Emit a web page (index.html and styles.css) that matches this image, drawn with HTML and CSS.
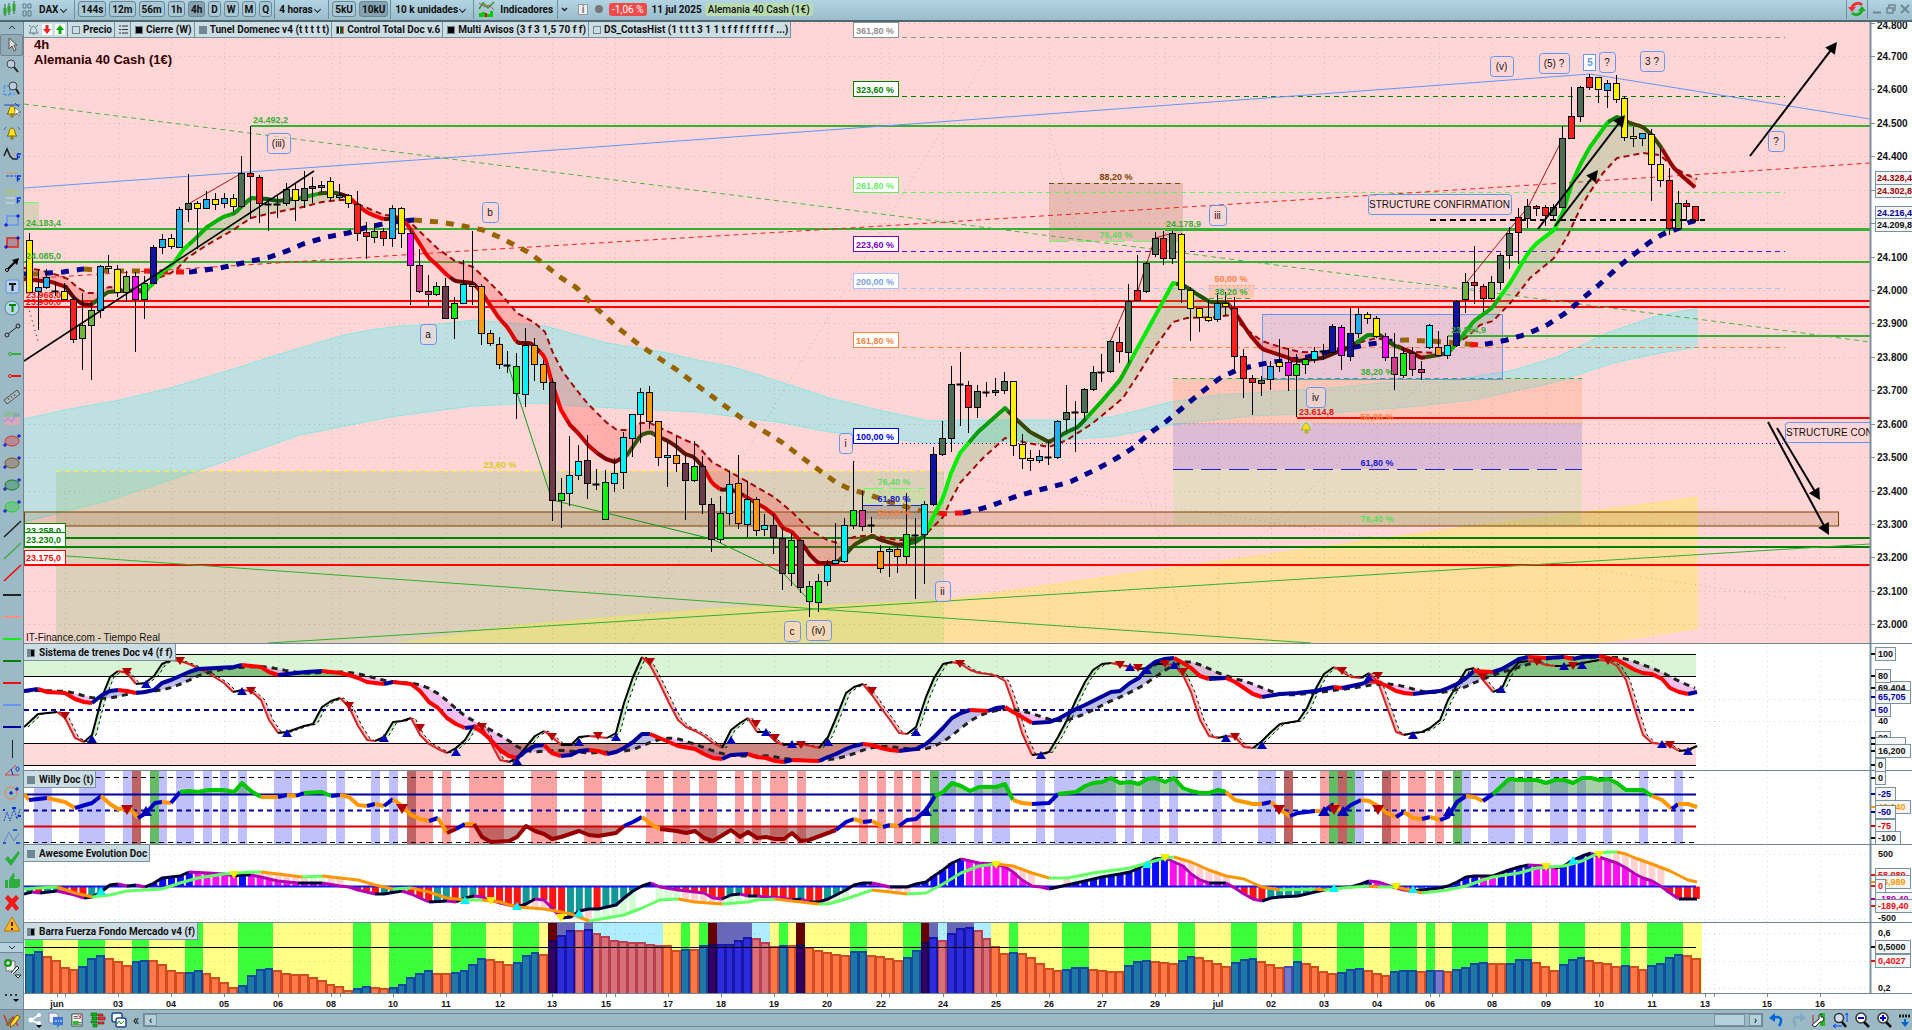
FILE: index.html
```
<!DOCTYPE html>
<html lang="es">
<head>
  <meta charset="utf-8">
  <title>DAX - Alemania 40 Cash (1€)</title>
  <link rel="stylesheet" href="styles.css">
</head>

<body>
  <header class="topbar">
    <svg class="logo" width="16" height="18" viewBox="0 0 16 18"><path d="M4 4v12M8 3v12M13 1v13" stroke="#1a7a1a"/><path d="M2.500 8h3v6h-3zM6.500 6h3v6h-3zM11.500 4h3v7h-3z" fill="#2fa52f"/></svg>
    <svg class="grip" width="10" height="18" viewBox="0 0 10 18"><path d="M1 4h3v4H1zM6 4h3v4H6zM1 11h3v5H1zM6 11h3v5H6z" fill="none" stroke="#5f7885"/></svg>
    <label class="pick pick-dax"><select aria-label="Valor"><option>DAX</option></select></label>
    <div class="group">
      <button>144s</button><button>12m</button><button>56m</button><button>1h</button><button class="on">4h</button><button>D</button><button>W</button><button>M</button><button>Q</button>
    </div>
    <label class="pick pick-time"><select aria-label="Periodo"><option>4 horas</option></select></label>
    <div class="group wide"><button>5kU</button><button class="on">10kU</button></div>
    <label class="pick pick-units"><select aria-label="Unidades"><option>10 k unidades</option></select></label>
    <button class="indicators">
      <svg width="18" height="18" viewBox="0 0 18 18"><path d="M1 9l4-6 5 5 6-6" fill="none" stroke="#2c9a2c" stroke-width="1.500"/><path d="M1 3l6 4 4-2 5 5" fill="none" stroke="#c44"/><path d="M1 17v-4h3v4M4 17v-5h3v5M9 17v-3h3v3M12 17v-6h3v6" fill="#0c0"/><path d="M7 17v-4h2v4z" fill="#e00"/></svg>
      Indicadores
    </button>
    <button class="more" aria-label="Más"><svg width="7" height="5" viewBox="0 0 7 5"><path d="M1 1l2.500 2.500L6 1" fill="none" stroke="#222" stroke-width="1.500"/></svg></button>
    <button class="info" aria-label="Información">i</button>
    <span class="dot"></span>
    <span class="change">-1,06 %</span>
    <span class="date">11 jul 2025</span>
    <span class="asset">Alemania 40 Cash (1€)</span>
    <button class="refresh" aria-label="Actualizar"><svg width="18" height="16" viewBox="0 0 18 16"><path d="M14 4A6 6 0 0 0 4 7" fill="none" stroke="#e33" stroke-width="3"/><path d="M0 6h8l-4 5z" fill="#e33"/><path d="M4 12a6 6 0 0 0 10-3" fill="none" stroke="#2a2" stroke-width="3"/><path d="M10 10h8l-4-5z" fill="#2a2"/></svg></button>
    <div class="window">
      <button aria-label="Minimizar"><svg width="10" height="10" viewBox="0 0 10 10"><path d="M1 8.500h8" stroke="#6f8793" stroke-width="2"/></svg></button>
      <button aria-label="Restaurar"><svg width="10" height="10" viewBox="0 0 10 10"><path d="M3 4V1h6v5H7M1 4h6v5H1z" fill="none" stroke="#6f8793" stroke-width="1.500"/></svg></button>
      <button aria-label="Cerrar"><svg width="10" height="10" viewBox="0 0 10 10"><path d="M1 1l8 8M9 1l-8 8" stroke="#6f8793" stroke-width="2"/></svg></button>
    </div>
  </header>

  <main class="desk">
    <nav class="tools" id="tools"></nav>

    <section class="charts">
      <div class="panel price">
        <div class="legend">
          <span class="alarms">
            <svg width="11" height="11" viewBox="0 0 11 11"><path d="M1 9c2-1 1-6 4.500-6.500C9 3 8 8 10 9zM4.500 10h2M1 1l2 2M10 1L8 3" fill="none" stroke="#5f7885"/></svg>
            <svg width="10" height="11" viewBox="0 0 10 11"><path d="M0 0h10v11H0z" fill="#fff"/><path d="M3.500 1h3v4H9L5 10 1 5h2.500z" fill="#e22"/></svg>
            <svg width="10" height="11" viewBox="0 0 10 11"><path d="M0 0h10v11H0z" fill="#fff"/><path d="M3.500 10h3V6H9L5 1 1 6h2.500z" fill="#0a0"/></svg>
          </span>
          <span><i class="sw open"></i>Precio</span>
          <span><svg width="9" height="9" viewBox="0 0 9 9"><path d="M0 1h2M3 1h6M0 4.500h2M3 4.500h6M0 8h2M3 8h6" stroke="#333"/></svg></span>
          <span><i class="sw black"></i>Cierre (W)</span>
          <span><i class="sw slate"></i>Tunel Domenec v4 (t t t t t)</span>
          <span><i class="sw stripes"></i>Control Total Doc v.6</span>
          <span><i class="sw black"></i>Multi Avisos (3 f 3 1,5 70 f f)</span>
          <span><i class="sw open"></i>DS_CotasHist (1 t t t 3 1 1 t f f f f f f f f ...)</span>
        </div>
        <svg id="price" viewBox="24 22 1888 622"></svg>
      </div>
      <div class="panel trains">
        <h2><i class="sw half"></i>Sistema de trenes Doc v4 (f f)</h2>
        <svg id="trains" viewBox="24 644 1888 127"></svg>
      </div>
      <div class="panel willy">
        <h2><i class="sw slate"></i>Willy Doc (t)</h2>
        <svg id="willy" viewBox="24 771 1888 74"></svg>
      </div>
      <div class="panel awesome">
        <h2><i class="sw slate"></i>Awesome Evolution Doc</h2>
        <svg id="awesome" viewBox="24 845 1888 78"></svg>
      </div>
      <div class="panel force">
        <h2><i class="sw half"></i>Barra Fuerza Fondo Mercado v4 (f)</h2>
        <svg id="force" viewBox="24 923 1888 71"></svg>
      </div>
      <div class="panel dates"><svg id="dates" viewBox="24 994 1888 15"></svg></div>
    </section>
  </main>

  <footer class="bottombar">
    <button class="draw" aria-label="Dibujar"><svg width="18" height="18" viewBox="0 0 18 18"><path d="M1 4l4 10 5-8 5 9" fill="none" stroke="#c33" stroke-width="1.500"/><path d="M3 15l4-8 4 8" fill="none" stroke="#393"/><path d="M8 12l6-8 3 2-6 8-4 2z" fill="#fd3" stroke="#850"/></svg></button>
    <button aria-label="Compartir"><svg width="16" height="16" viewBox="0 0 16 16"><path d="M12 3L4 8l8 4" fill="none" stroke="#fff" stroke-width="1.500"/><circle cx="12" cy="3" r="2" fill="#fff"/><circle cx="4" cy="8" r="2.500" fill="#fff"/><circle cx="12" cy="11" r="2" fill="#fff"/><path d="M9 13h6l-3 3z"/></svg></button>
    <button aria-label="Chat"><svg width="16" height="16" viewBox="0 0 16 16"><path d="M1 1h7l2 2v8H1z" fill="#eef" stroke="#88a"/><path d="M5 5h10v8h-3l-3 3v-3H5z" fill="#3a78d8"/><path d="M7 9h2M10 9h1M12 9h2" stroke="#fff"/></svg></button>
    <button aria-label="Informe"><svg width="12" height="14" viewBox="0 0 14 16"><path d="M1 1h12v14H1z" fill="#fff" stroke="#333"/><path d="M2 9h7v5H2z" fill="#3b3"/><path d="M3 4h5M3 6h5M9 11h3M9 13h3" stroke="#444"/><path d="M8 2l3 3M11 2v4H8" stroke="#c22" fill="none"/></svg></button>
    <button aria-label="Libro"><svg width="16" height="16" viewBox="0 0 16 16"><path d="M1 1h6v3H1zM2 5h5v3H2zM1 9h6v2H1zM3 12h4v3H3z" fill="#0b0" stroke="#050" stroke-width=".5"/><path d="M8 2h5v2H8zM8 5h7v3H8zM8 10h6v2H8z" fill="#e33" stroke="#600" stroke-width=".5"/></svg></button>
    <button aria-label="Ventanas"><svg width="16" height="16" viewBox="0 0 16 16"><rect x="1" y="1" width="10" height="9" rx="2" fill="#fff" stroke="#248" stroke-width="1.500"/><rect x="5" y="6" width="10" height="9" rx="2" fill="#fff" stroke="#248" stroke-width="1.500"/><path d="M6 12l2-3 2 3 3-3" stroke="#292" fill="none"/></svg></button>
    <button class="fold">«</button>
    <div class="scroll">
      <button aria-label="Atrás">‹</button>
      <div class="track"><div class="thumb"></div></div>
      <button aria-label="Adelante">›</button>
    </div>
    <div class="zoom">
      <button aria-label="Deshacer"><svg width="16" height="16" viewBox="0 0 16 16"><path d="M4 6c8-3 10 2 6 8" fill="none" stroke="#06d" stroke-width="2.500"/><path d="M0 6l6-5v9z" fill="#06d"/></svg></button>
      <button aria-label="Rehacer"><svg width="16" height="16" viewBox="0 0 16 16"><path d="M12 6C4 3 2 8 6 14" fill="none" stroke="#7faac4" stroke-width="2.500"/><path d="M16 6l-6-5v9z" fill="#7faac4"/></svg></button>
      <button aria-label="Ajustes"><svg width="16" height="16" viewBox="0 0 16 16"><path d="M9 1h5v13H9z" fill="#2b2"/><path d="M1 13L8 7V3l2-1v3h2l1 2-2 3H9l-5 5z" fill="#fff" stroke="#222"/><path d="M2 3v8" stroke="#c22"/></svg></button>
      <button aria-label="Zoom libre"><svg width="17" height="17" viewBox="0 0 17 17"><circle cx="7" cy="6" r="4.500" fill="#cde" stroke="#333" stroke-width="1.500"/><path d="M10 10l4 5" stroke="#111" stroke-width="2.500"/><path d="M15 1v9M2 14h8M13 3l2-2 1 2M4 12l-3 2 3 2" stroke="#04f" fill="none"/></svg></button>
      <button aria-label="Alejar"><svg width="17" height="17" viewBox="0 0 17 17"><circle cx="7" cy="6" r="5" fill="#fff" stroke="#333" stroke-width="1.500"/><path d="M10 10l5 5" stroke="#111" stroke-width="2.500"/><path d="M4 6h6" stroke="#00d" stroke-width="2"/></svg></button>
      <button aria-label="Acercar"><svg width="17" height="17" viewBox="0 0 17 17"><circle cx="7" cy="6" r="5" fill="#fff" stroke="#333" stroke-width="1.500"/><path d="M10 10l5 5" stroke="#111" stroke-width="2.500"/><path d="M4 6h6M7 3v6" stroke="#00d" stroke-width="2"/></svg></button>
      <button aria-label="Último"><svg width="14" height="16" viewBox="0 0 14 16"><path d="M1 4h12" stroke="#222" stroke-width="3" stroke-dasharray="2 1"/><path d="M7 7v3" stroke="#06c" stroke-width="2"/><path d="M3 10h8l-4 5z" fill="#06c"/></svg></button>
    </div>
  </footer>

  <script src="chart.js"></script>
</body>
</html>
```
FILE: styles.css
```
* {
  box-sizing: border-box;
}

body {
  margin: 0;
  height: 100vh;
  display: flex;
  flex-direction: column;
  overflow: hidden;
  background: #9cb9c6;
  font: bold 10px Roboto, "Liberation Sans", sans-serif;
  color: #111;
}

button, select {
  font: inherit;
  color: inherit;
  margin: 0;
  padding: 0;
  border: 0;
  background: none;
}

button {
  display: flex;
  align-items: center;
  justify-content: center;
}

svg {
  display: block;
  flex: none;
}

/* top toolbar */
.topbar {
  flex: none;
  display: flex;
  align-items: center;
  height: 22px;
  padding-bottom: 2px;
  background: linear-gradient(#b3d4e2, #9bbccb);
  border-bottom: 2px solid #4f6873;
  white-space: nowrap;
}

.logo {
  margin: 0 5px 0 1px;
}

.grip {
  margin-right: 3px;
}

.pick {
  position: relative;
  height: 20px;
  padding: 0 6px 0 4px;
  border-right: 1px solid #6f8f9d;
  display: flex;
  align-items: center;
}

.pick select {
  appearance: none;
  width: 100%;
}

.pick::after {
  content: "";
  position: absolute;
  right: 8px;
  width: 4px;
  height: 4px;
  border: solid #222;
  border-width: 0 1px 1px 0;
  transform: rotate(45deg);
}

.pick-dax { width: 40px; }
.pick-time { width: 54px; }
.pick-units { width: 83px; }

.group {
  height: 20px;
  display: flex;
  align-items: center;
  gap: 3px;
  padding: 0 2px 0 3px;
  border-right: 1px solid #6f8f9d;
}

.group button {
  height: 16px;
  padding: 0 2px;
  border: 1px solid #6b8896;
  border-radius: 3px;
  background: #a9c8d6;
}

.group .on {
  background: #86a2b0;
}

.indicators {
  height: 20px;
  gap: 4px;
  padding: 0 4px;
  border-right: 1px solid #6f8f9d;
}

.more {
  width: 12px;
}

.info {
  width: 10px;
  height: 11px;
  margin-left: 8px;
  background: #eee;
  border: 1px solid #999;
  color: #777;
}

.dot {
  width: 8px;
  height: 8px;
  margin: 0 6px 0 7px;
  border-radius: 50%;
  background: #777;
}

.change {
  padding: 1px 3px;
  border-radius: 3px;
  background: #f04a4a;
  color: #fff;
  font-weight: normal;
}

.date {
  margin: 0 3px 0 5px;
}

.asset {
  padding: 1px 3px;
  border-radius: 3px;
  background: #b9dcb0;
  font-weight: 500;
}

.refresh {
  margin-left: auto;
  height: 20px;
  padding: 0 1px;
  border: solid #6f8f9d;
  border-width: 0 1px;
}

.window {
  display: flex;
  gap: 4px;
  padding: 0 2px 0 4px;
}

/* drawing tools */
.desk {
  flex: 1;
  min-height: 0;
  display: flex;
}

.tools {
  flex: none;
  width: 24px;
  display: flex;
  flex-direction: column;
  border-right: 1px solid #6f8793;
  background: #9cb9c6;
}

.tools button {
  flex: none;
  height: 22px;
}

.tools .on {
  background: #91aab5;
  border: 1px solid #6f8793;
  border-radius: 2px;
}

.tools .up {
  height: 12px;
}

.tools .list {
  flex: 1;
  min-height: 0;
  overflow: hidden;
}

.tools .list button {
  width: 100%;
}

.tools .down {
  height: 11px;
  border: solid #6f8793;
  border-width: 1px 0;
  background: #b4d0dc;
}

.tools .tall {
  height: 28px;
}

/* stacked chart panels */
.charts {
  flex: 1;
  min-width: 0;
  display: flex;
  flex-direction: column;
  background: #fff;
}

.panel {
  position: relative;
  min-height: 0;
  flex-basis: 0;
}

.panel > svg {
  width: 100%;
  height: 100%;
}

.price { flex-grow: 622; }
.trains { flex-grow: 127; }
.willy { flex-grow: 74; }
.awesome { flex-grow: 78; }
.force { flex-grow: 71; }
.dates { flex-grow: 15; }

.panel h2, .legend {
  position: absolute;
  top: 0;
  left: 0;
  margin: 0;
  display: flex;
  align-items: center;
  height: 16px;
  font-size: 10px;
  background: #cddde4;
  border: solid #7a929e;
  border-width: 0 1px 1px 0;
  white-space: nowrap;
}

.panel h2 {
  height: 17px;
  padding: 1px 2px 0 3px;
}

.legend span {
  height: 15px;
  display: flex;
  align-items: center;
  gap: 3px;
  padding: 0 2px 0 4px;
  border-right: 1px solid #7a929e;
}

.legend span:last-child {
  border: 0;
}

.sw {
  width: 8px;
  height: 8px;
  border: 1px solid #6f8793;
}

.panel h2 .sw {
  margin-right: 4px;
}

.black { background: #000; }
.slate { background: #6f8793; }
.half { background: linear-gradient(90deg, #6f8793 50%, #000 50%); }
.stripes { background: linear-gradient(90deg, #000 25%, #e0c 25% 40%, #fff 40% 50%, #060 50% 75%, #c00 75%); }

/* text inside the charts */
.t {
  font: bold 9px "Liberation Sans", sans-serif;
}

.axis {
  font: bold 10px "Liberation Sans", sans-serif;
}

.note {
  font: 10px "Liberation Sans", sans-serif;
}

.title {
  font: bold 13px "Liberation Sans", sans-serif;
}

.small {
  font: 10px "Liberation Sans", sans-serif;
}

/* bottom bar */
.bottombar {
  flex: none;
  height: 21px;
  display: flex;
  align-items: center;
  border-top: 1px solid #6f8793;
}

.bottombar > button {
  width: 21px;
}

.bottombar > .draw {
  width: 24px;
  height: 20px;
  border-right: 1px solid #6f8793;
  background: #8aa3af;
}

.bottombar > .fold {
  width: 14px;
  font-size: 14px;
  font-weight: normal;
}

.scroll {
  flex: 1;
  display: flex;
  height: 14px;
  border: 1px solid #6f8793;
}

.scroll button {
  width: 13px;
  background: #b4d0dc;
  border: 1px solid #7a929e;
}

.track {
  flex: 1;
  display: flex;
  justify-content: flex-end;
  padding-right: 4px;
}

.thumb {
  width: 31px;
  border: 1px solid #7a929e;
  background: #b4d0dc;
}

.zoom {
  display: flex;
  gap: 5px;
  padding-left: 6px;
}
```
FILE: chart.js
```
const NS = 'http://www.w3.org/2000/svg';
const STEP = 8.865, FIRST = 29.7, RIGHT = 1870.5;

function el(parent, name, attrs, text) {
  const e = document.createElementNS(NS, name);
  for (const k in attrs) e.setAttribute(k, attrs[k]);
  if (text !== undefined) e.textContent = text;
  parent.appendChild(e);
  return e;
}
const rect = (g, x, y, w, h, fill, stroke) => el(g, 'rect', { x, y, width: w, height: h, fill, stroke: stroke || 'none' });
const line = (g, x1, y1, x2, y2, stroke, width = 1, dash = '') =>
  el(g, 'line', { x1, y1, x2, y2, stroke, 'stroke-width': width, 'stroke-dasharray': dash });
const text = (g, x, y, s, fill, cls = 't', anchor = 'start') =>
  el(g, 'text', { x, y, fill, class: cls, 'text-anchor': anchor }, s);
const poly = (g, pts, fill) => el(g, 'polygon', { points: pts.join(' '), fill });
const path = (g, pts, stroke, width = 1, dash = '') =>
  el(g, 'polyline', { points: pts.join(' '), fill: 'none', stroke, 'stroke-width': width, 'stroke-dasharray': dash, 'stroke-linejoin': 'round' });
const parse = s => s.trim().split(/\s+/).map(p => p.split(',').map(Number));
const xAt = i => FIRST + STEP * i;

function at(pts, x) {
  if (x <= pts[0][0]) return pts[0][1];
  for (let i = 1; i < pts.length; i++) {
    if (x <= pts[i][0]) {
      const [a, b] = [pts[i - 1], pts[i]];
      return a[1] + (b[1] - a[1]) * (x - a[0]) / (b[0] - a[0] || 1);
    }
  }
  return pts[pts.length - 1][1];
}

// one polyline for each stretch of the same colour
function runs(g, pts, colour, width, dash) {
  let cur = [pts[0]], col = null;
  for (let i = 1; i < pts.length; i++) {
    const c = colour(pts[i - 1], pts[i]);
    if (col && c !== col) { path(g, cur, col, width, dash); cur = [pts[i - 1]]; }
    cur.push(pts[i]);
    col = c;
  }
  path(g, cur, col, width, dash);
}
const byX = list => (a, b) => (list.find(l => (a[0] + b[0]) / 2 < l[0]) || list[list.length - 1])[1];
const dense = (pts, step = 3) => {
  const out = [];
  for (let x = pts[0][0]; x <= pts[pts.length - 1][0]; x += step) out.push([x, at(pts, x)]);
  return out;
};

// fill between two curves, colour depends on which one is on top
function band(g, fa, fb, x0, x1, above, below) {
  let up = [], down = [], sign = 0;
  const flush = () => { if (up.length > 1 && sign) poly(g, up.concat(down.reverse()), sign < 0 ? above : below); };
  for (let x = x0; x <= x1; x += 2) {
    const a = fa(x), b = fb(x), s = a < b ? -1 : a > b ? 1 : 0;
    if (s !== sign) { flush(); up = []; down = []; sign = s; }
    up.push([x, a]); down.push([x, b]);
  }
  flush();
}

function tri(g, x, y, up, fill, r = 5) {
  const h = r - 1;
  poly(g, up ? [[x - r, y + h], [x + r, y + h], [x, y - h]] : [[x - r, y - h], [x + r, y - h], [x, y + h]], fill);
}
function tag(g, y, s, colour, w) {
  rect(g, 1875.5, y - 6.5, w || s.length * 5 + 5, 13, '#f4f6f7', '#7a929e');
  text(g, 1878, y + 3, s, colour);
  line(g, 1871, y, 1875, y, colour, 2);
}
function frame(g, y0, y1) {
  rect(g, 1871, y0, 41, y1 - y0, '#fff');
  line(g, RIGHT, y0, RIGHT, y1, '#7a929e', 2);
  line(g, 24, y1 - 0.5, 1912, y1 - 0.5, '#6f8793');
}

const days = [[57, 'jun'], [65], [118, '03'], [171, '04'], [224, '05'], [278, '06'], [331, '08'], [340], [393, '10'], [446, '11'],
  [500, '12'], [552, '13'], [606, '15'], [615], [668, '17'], [721, '18'], [774, '19'], [827, '20'], [881, '22'], [889], [943, '24'],
  [996, '25'], [1049, '26'], [1102, '27'], [1155, '29'], [1165], [1218, 'jul'], [1271, '02'], [1324, '03'], [1377, '04'], [1430, '06'],
  [1439], [1492, '08'], [1546, '09'], [1599, '10'], [1652, '11'], [1705, '13'], [1714], [1767, '15'], [1820, '16']];
function grid(g, y0, y1, rows = [], colour = '#00000022') {
  days.forEach(d => { if (d[0] > 60) line(g, d[0] + .5, y0, d[0] + .5, y1, colour, 1, '1 4'); });
  rows.forEach(y => line(g, 24, y, 1870, y, colour, 1, '1 4'));
}

/* ---------- price ---------- */
const INK = { y: '#fff000', c: '#22b0ec', r: '#ff1e1e', g: '#4f6e54', o: '#ff9a10', n: '#10f010', a: '#00f4ff', m: '#ff00ff',
  p: '#d33c8c', b: '#1212a4', w: '#6c3a48', l: '#72b43c', k: '#111' };

// colour, high, body top, body bottom, low
const candles = `y233,240,292,292 c270,287,291,330 c269,277,287,289 k282,291,291,296 y283,291,299,299 r297,299,339,343 l293,325,338,370
l303,310,325,380 c265,266,310,318 y255,266,268,273 y265,269,292,297 l271,276,292,302 m272,276,299,352 n276,283,299,319 b245,247,283,283
c234,239,247,254 y234,238,246,249 c207,209,247,247 g174,203,209,222 y201,203,208,249 c191,199,208,209 y193,199,204,210 c193,198,203,208
y194,198,206,212 g156,173,206,208 r126,173,176,219 r175,177,203,223 k199,204,204,231 k195,204,204,218 g183,189,203,206 y183,189,200,221
g171,188,200,208 g177,186,188,203 g181,185,187,192 y177,181,197,201 c184,195,197,199 y194,195,203,208 r191,204,233,241 r222,232,236,259
l223,231,237,243 r228,231,238,246 c205,208,238,247 y207,208,233,248 m228,233,265,305 p249,265,291,293 p275,291,294,307 n282,286,294,296
w278,286,318,318 n297,303,318,339 a260,284,303,304 o231,284,286,305 o284,286,333,345 o330,333,343,346 o337,344,364,369 k351,365,365,373
n353,366,393,419 a328,345,394,407 o338,345,364,381 o360,364,382,390 w378,382,500,521 n478,493,500,528 a436,475,493,506 a445,461,475,480
w435,460,483,499 k469,484,484,490 n470,482,519,519 a458,473,483,492 a432,437,472,489 a414,414,438,457 a388,392,414,443 o386,392,421,429
o421,421,457,466 a442,455,457,487 o437,455,463,472 w455,463,480,520 n441,466,480,482 w456,466,504,514 w498,504,539,552 n496,513,539,543
a471,484,513,525 o455,483,523,529 a481,499,524,537 o497,499,530,536 a514,525,529,536 w514,525,537,554 w527,538,573,590 n533,540,573,586
w540,540,587,593 n581,586,601,617 n574,581,602,612 a560,565,581,586 a523,560,563,564 a518,525,561,563 n461,510,525,529 p491,510,526,531
k517,525,525,533 o545,551,568,573 a547,549,551,577 o547,549,556,573 n493,534,556,564 k518,535,535,599 a501,504,534,584 b447,454,504,506
g421,438,454,456 g366,384,438,452 k352,384,384,426 r381,385,407,433 g385,391,407,418 k382,392,392,397 g378,390,392,396 g372,381,390,394
y381,381,445,456 y434,444,458,469 y450,458,460,471 c450,456,460,463 k441,457,457,465 c420,421,457,459 g385,412,419,432 k401,412,412,452
g388,389,412,419 g366,372,389,391 k354,372,372,382 g340,341,371,373 r327,342,351,363 g284,301,352,363 r255,290,300,301 g262,263,291,293
g232,238,254,257 r231,238,258,265 g231,233,258,264 y233,234,289,303 y287,290,308,341 y308,308,317,332 y300,317,320,322 c293,303,319,322
y292,303,306,316 r297,308,356,372 r349,356,378,398 r375,378,382,415 g376,380,383,396 c361,366,379,390 y339,362,366,372 m348,362,375,391
n354,364,375,417 n355,359,364,374 a347,351,359,363 k344,351,351,360 b324,326,352,353 m325,327,355,370 b308,333,356,361 c308,314,333,338
y312,314,318,324 y316,318,336,338 m333,336,357,361 p333,357,374,390 n347,353,375,378 p347,353,369,376 p361,369,372,380 a324,325,347,349
o331,347,355,357 a336,345,355,359 b300,301,345,347 l273,282,299,313 r246,282,285,304 r284,286,298,312 l276,282,298,300 g253,255,282,290
g227,233,255,269 r208,217,232,264 g199,206,218,228 r205,206,208,216 r205,207,215,226 g204,207,215,221 g126,138,207,208 r87,116,138,138
g86,87,116,122 r74,77,87,90 y77,77,89,103 c80,83,90,108 y75,83,99,103 y96,98,137,141 y127,136,138,147 c133,133,138,146 y129,134,164,201
y148,164,180,187 r168,180,228,235 l191,203,228,229 r200,203,206,221 r206,206,220,222`.split(/\s+/).map(s => [s[0], ...s.slice(1).split(',').map(Number)]);

const ma = parse(`24,279 33,280 52,282 66,287 74,298 82,304 91,305 100,298 108,292 120,291 145,290 152,285 162,272 173,264 183,250 197,237
207,227 223,217 235,213 243,205 251,198 267,199 278,201 300,198 322,193 337,193 349,197 357,205 368,213 383,219 403,219 411,230 428,257
437,265 447,275 455,281 473,283 482,293 499,318 508,328 517,343 530,343 535,347 545,357 552,383 561,410 570,425 579,434 588,445 597,453
606,459 615,462 627,455 632,448 641,435 650,432 659,437 668,441 677,447 685,454 694,457 703,467 712,483 721,490 730,489 739,493 748,498
756,503 765,508 774,515 783,528 792,532 801,542 810,555 818,563 836,563 845,555 854,545 863,540 872,536 881,540 898,545 916,542 925,535
934,515 943,498 951,473 960,453 978,432 1005,408 1017,420 1030,432 1049,442 1067,432 1078,427 1102,401 1120,380 1138,347 1160,307 1173,283
1183,285 1200,296 1210,302 1228,303 1238,317 1250,335 1262,349 1280,355 1297,361 1323,358 1342,350 1353,345 1368,335 1380,335 1393,345
1413,353 1421,358 1439,355 1448,353 1457,343 1474,321 1492,308 1510,283 1528,253 1537,243 1554,230 1563,212 1572,183 1581,163 1590,147
1608,122 1617,117 1630,123 1643,127 1652,135 1661,147 1673,167 1683,177 1697,189`);
const maInk = [[62, '#a00000'], [92, '#5e0000'], [147, '#2c5a00'], [190, '#00e000'], [230, '#00b400'], [262, '#0c940c'], [300, '#065c06'],
  [318, '#16a016'], [340, '#2c5200'], [352, '#500'], [384, '#f00000'], [405, '#6a0f00'], [450, '#f00000'], [477, '#700000'], [516, '#e00000'],
  [540, '#7c0000'], [568, '#ff0000'], [598, '#c40000'], [620, '#800000'], [655, '#36500a'], [704, '#5a1600'], [720, '#e80000'], [745, '#700000'],
  [800, '#d00000'], [837, '#880000'], [876, '#3c4a00'], [904, '#5a1e00'], [926, '#087008'], [968, '#00f000'], [1008, '#0a9c0a'],
  [1055, '#3c4600'], [1085, '#067006'], [1130, '#00b800'], [1176, '#00ea00'], [1230, '#205400'], [1295, '#980000'], [1355, '#521000'],
  [1376, '#0a8a0a'], [1400, '#2c5200'], [1424, '#7a0000'], [1450, '#3c4a00'], [1500, '#08b008'], [1560, '#00ec00'], [1608, '#00d000'],
  [1626, '#0a800a'], [1662, '#3c4600'], [1700, '#980000']];
const sig = parse(`24,268 40,270 57,275 68,279 77,287 87,293 95,293 102,289 110,287 120,289 145,293 158,278 171,273 178,268 187,258 207,245
233,230 251,218 267,214 287,210 303,207 322,202 340,200 353,200 360,205 384,215 402,217 413,225 437,248 455,261 473,267 487,280 500,293
517,313 535,323 545,332 553,353 563,372 579,393 588,404 606,422 617,430 627,430 641,423 650,423 667,431 685,440 697,445 712,462 730,472
748,482 765,492 774,497 792,512 810,530 827,540 838,543 854,537 872,535 897,540 916,540 925,535 943,517 951,500 960,483 983,458 1005,438
1023,442 1049,447 1067,440 1093,423 1123,398 1138,375 1155,347 1173,322 1187,318 1217,317 1230,315 1247,330 1262,341 1280,347 1300,352
1323,353 1342,352 1358,343 1377,338 1393,343 1413,352 1440,353 1453,345 1467,337 1480,325 1493,321 1513,300 1530,278 1554,258 1567,237
1581,207 1590,192 1603,173 1617,158 1643,153 1660,155 1673,167 1687,175 1697,179`);
const trend = parse(`24,274 35,274 63,272 83,269 110,271 145,271 165,272 190,272 220,268 247,262 270,257 287,251 303,244 327,237 348,233 368,227
393,222 413,220 440,222 463,226 483,230 499,237 530,253 560,277 577,288 593,305 617,327 637,343 657,357 677,370 690,380 717,400 740,417 767,433
783,443 800,456 823,473 837,483 850,489 870,495 890,502 917,510 938,513 947,514 957,513 963,513 980,509 993,505 1017,496 1043,489 1070,482
1097,469 1117,458 1133,448 1150,433 1167,421 1187,404 1203,391 1220,378 1237,370 1257,365 1273,362 1300,359 1323,353 1345,349 1370,344
1393,341 1405,340 1427,341 1447,342 1467,344 1480,345 1487,344 1507,340 1527,334 1547,325 1567,312 1583,298 1600,284 1617,268 1633,255
1650,242 1663,234 1677,229 1687,223 1697,220`);
const trendInk = [[30, '#0b0b96'], [46, '#986400'], [84, '#0b0b96'], [145, '#986400'], [188, '#f01010'], [415, '#00008c'], [940, '#986400'],
  [962, '#f01010'], [1400, '#00008c'], [1470, '#986400'], [1484, '#f01010'], [1800, '#00008c']];

(function price() {
  const g = document.getElementById('price');
  rect(g, 24, 22, 1847, 622, '#ffd6d6');

  const tealTop = parse(`24,419 64,410 120,400 170,388 230,370 280,354 340,336 370,330 400,326 440,324 474,320 545,326 563,331 607,343 663,352
    697,360 737,368 790,385 830,398 883,411 930,421 960,420 1060,420 1110,417 1140,410 1170,402 1217,395 1330,388 1380,383 1447,381 1510,371
    1557,357 1607,333 1653,317 1698,308`);
  const tealBottom = parse(`24,522 110,500 200,470 300,435 390,417 450,409 473,406 537,403 577,406 617,408 697,412 777,422 830,432 883,438 930,443
    970,442 1050,441 1117,436 1170,425 1250,416 1330,413 1410,407 1473,400 1553,383 1613,363 1660,353 1698,347`);
  poly(g, tealTop.concat([...tealBottom].reverse()), '#bfe0e0');
  path(g, tealTop, '#8ee6e6');
  path(g, tealBottom, '#8ee6e6');
  const sand = parse('440,637 517,625 610,617 717,608 850,604 944,600 1120,575 1300,550 1450,529 1640,505 1698,497');
  poly(g, sand.concat([[1698, 629], [1640, 638], [1600, 643], [390, 643]]), '#ffdf9b');
  path(g, sand, '#ffe27a');

  // shaded zones
  rect(g, 56, 471, 888, 172, 'rgba(158,197,137,.35)');
  poly(g, sand.filter(p => p[0] < 945).concat([[944, 643], [390, 643]]), '#e6de8a');
  rect(g, 24, 202, 15, 27, 'rgba(158,197,137,.35)');
  line(g, 24, 202.500, 39, 202.500, '#6f6');
  rect(g, 1049, 183, 134, 58, 'rgba(140,80,40,.2)');
  rect(g, 1209, 285, 45, 13, 'rgba(255,170,110,.35)');
  rect(g, 863, 488, 62, 17, 'rgba(190,230,150,.45)');
  rect(g, 863, 505, 62, 14, 'rgba(110,110,140,.3)');
  rect(g, 1173, 378, 409, 45, 'rgba(255,160,110,.3)');
  rect(g, 1173, 423, 409, 46, 'rgba(130,120,210,.28)');
  rect(g, 1173, 469, 409, 56, 'rgba(190,230,160,.35)');
  rect(g, 1262.500, 314.500, 240, 65, 'rgba(170,150,210,.25)', '#6495f5');
  rect(g, 24.500, 512, 1814, 14, 'rgba(128,64,0,.16)', '#804000');

  const rows = [];
  for (let p = 23000; p <= 24800; p += 100) rows.push(Math.round(290 - (p - 24000) * .3342) + .5);
  grid(g, 38, 643, rows);

  [[630, 643, 942, 130], [942, 130, 985, 60], [854, 461, 1786, 598], [1050, 130, 1180, 613], [1180, 613, 1600, 215], [818, 603, 854, 461], [854, 461, 905, 520]]
    .forEach(l => line(g, ...l, '#00000030', 1, '1 4'));

  // levels
  const GREEN = '#34b034';
  line(g, 251, 126, 1870, 126, GREEN, 2);
  line(g, 24, 229, 1870, 229, GREEN, 2);
  line(g, 1165, 230, 1870, 230, GREEN, 2);
  line(g, 24, 262, 1870, 262, GREEN, 2);
  line(g, 1448, 336, 1870, 336, GREEN, 2);
  [538, 547].forEach(y => line(g, 24, y, 1870, y, '#008000', 2));
  [301, 307, 565].forEach(y => line(g, 24, y, 1870, y, '#f00', 2));
  line(g, 1297, 418, 1870, 418, '#f00', 2);

  const fibs = [[37, '361,80 %', '#909090'], [96, '323,60 %', '#008000'], [192, '261,80 %', '#66ee66'], [251, '223,60 %', '#7a00c0'],
    [288, '200,00 %', '#a8c0f5'], [347, '161,80 %', '#ff8040'], [443, '100,00 %', '#0000e0']];
  fibs.forEach(([y, s, c]) => {
    line(g, 902, y + .5, 1785, y + .5, c, 1, s[0] === '1' && s[1] === '0' ? '1 3' : '5 4');
    rect(g, 853.500, y - 14.500, 45, 15, '#fff', c);
    text(g, 856, y - 3, s, c === '#a8c0f5' ? '#80a0e0' : c);
  });

  line(g, 56, 471.500, 944, 471.500, '#f6f024', 1, '5 4');
  line(g, 1049, 183.500, 1183, 183.500, '#804000', 1, '5 4');
  line(g, 1049, 241.500, 1183, 241.500, '#6f6', 1, '20 8');
  line(g, 1209, 285.500, 1254, 285.500, '#ff8040', 1, '1 3');
  line(g, 1209, 298.500, 1254, 298.500, GREEN, 1, '5 4');
  line(g, 863, 488.500, 925, 488.500, '#6f6', 1, '20 8');
  line(g, 863, 505.500, 925, 505.500, '#2020e0', 1, '20 4');
  line(g, 863, 519.500, 925, 519.500, '#ff8040', 1, '1 3');
  line(g, 1173, 378.500, 1582, 378.500, GREEN, 1, '5 4');
  line(g, 1173, 423.500, 1582, 423.500, '#ff8040', 1, '1 3');
  line(g, 1173, 469.500, 1582, 469.500, '#2020e0', 1, '20 8');

  path(g, parse('24,188 500,154 1280,97 1590,74 1720,95 1870,119'), '#6495f5');
  path(g, parse('24,104 497,165 850,210 1330,272 1720,322 1870,342'), '#46b446', 1, '5 4');
  path(g, parse('24,279 497,249 850,228 1330,198 1720,173 1870,163'), '#f02020', 1, '5 4');
  path(g, parse('24,553 450,583 930,617 1311,643'), '#30b030');
  path(g, parse('268,643 450,632 930,602 1870,544'), '#30b030');

  // moving averages
  band(g, x => at(ma, x), x => at(sig, x), 24, 1697, 'rgba(90,180,90,.25)', 'rgba(255,70,70,.28)');
  path(g, sig, '#a00808', 2, '6 4');
  runs(g, dense(trend), byX(trendInk), 5, '8 8');
  runs(g, dense(ma), byX(maInk), 4);

  // thin swing lines
  ['190,203 242,173', '1111,340 1128,301', '1138,290 1155,238 1173,233', '1467,282 1510,229 1528,207 1563,138'].forEach(s => path(g, parse(s), '#a81414'));
  path(g, parse('508,365 552,500 606,513 712,539 783,573 810,601'), '#109810');

  candles.forEach(([c, h, t, b, l], i) => {
    const x = Math.round(xAt(i)) - .5;
    line(g, x, h, x, l, '#000');
    if (c === 'k') line(g, x - 4, t + .5, x + 3, t + .5, '#000', 2);
    else rect(g, x - 3, t + .5, 6, Math.max(2, b - t), INK[c], '#000');
  });

  line(g, 24, 361, 314, 171, '#000', 1.500);
  line(g, 28, 306, 38, 341, '#000', 1, '1 4');
  line(g, 1430, 220, 1705, 220, '#000', 2, '6 4');
  [[1538, 229, 1625, 115], [1555, 226, 1598, 170], [1750, 156, 1837, 42], [1768, 422, 1829, 535], [1777, 428, 1820, 500]].forEach(([x1, y1, x2, y2]) => {
    const a = Math.atan2(y2 - y1, x2 - x1), p = (r, d) => [x2 - r * Math.cos(a + d), y2 - r * Math.sin(a + d)];
    line(g, x1, y1, ...p(6, 0), '#000', 2);
    poly(g, [[x2, y2], p(13, .48), p(13, -.48)], '#000');
  });

  // level texts
  [[253, 123, '24.492,2'], [26, 226, '24.183,4'], [26, 259, '24.085,0'], [1166, 227, '24.178,9'], [1451, 333, '23.864,9']].forEach(t => text(g, ...t, GREEN));
  [[26, 298, '23.968,0'], [26, 305, '23.950,0'], [1299, 415, '23.614,8']].forEach(t => text(g, ...t, '#f01010'));
  [[523, '23.258,0', '#008000'], [532, '23.230,0', '#008000'], [550, '23.175,0', '#f00']].forEach(([y, s, c]) => {
    rect(g, 24.500, y + .5, 41, 14, '#fff', c);
    text(g, 26, y + 11, s, c);
  });
  [[500, 468, '23,60 %', '#d6cc18'], [1116, 180, '88,20 %', '#804000'], [1116, 238, '76,40 %', '#5fdc5f'], [1231, 282, '50,00 %', '#ff8040'],
    [1231, 295, '38,20 %', GREEN], [894, 485, '76,40 %', '#5fdc5f'], [894, 502, '61,80 %', '#2020d0'], [894, 516, '50,00 %', '#ff8040'],
    [1377, 375, '38,20 %', GREEN], [1377, 420, '50,00 %', '#ff8040'], [1377, 466, '61,80 %', '#2020d0'], [1377, 522, '76,40 %', '#5fdc5f']]
    .forEach(([x, y, s, c]) => text(g, x, y, s, c, 't', 'middle'));

  // wave labels
  [[267, 133, 23, '(iii)'], [482, 202, 16, 'b'], [420, 324, 16, 'a'], [839, 433, 13, 'i'], [784, 621, 16, 'c'], [806, 620, 25, '(iv)'],
    [935, 581, 15, 'ii'], [1209, 205, 17, 'iii'], [1306, 387, 19, 'iv'], [1490, 56, 23, '(v)'], [1539, 53, 30, '(5) ?'], [1599, 52, 16, '?'],
    [1640, 51, 24, '3 ?'], [1368, 194, 143, 'STRUCTURE CONFIRMATION'], [1768, 131, 16, '?'], [1785, 422, 143, 'STRUCTURE CONFIRMATION']].forEach(([x, y, w, s]) => {
    el(g, 'rect', { x: x + .5, y: y + .5, width: w, height: 20, rx: 3, fill: 'rgba(255,214,214,.6)', stroke: '#6495f5' });
    text(g, x + w / 2, y + 14, s, '#111', 'note', 'middle');
  });
  rect(g, 1583.500, 54.500, 12, 16, '#fff', '#6495f5');
  text(g, 1590, 66, '5', '#6495f5', 'axis', 'middle');

  el(g, 'circle', { cx: 1306, cy: 427, r: 6, fill: '#c8d4d8' });
  el(g, 'path', { d: 'M1301 430c2-1 1-6 5-7 4 1 3 6 5 7zM1305 431h3v2h-3z', fill: '#f0dc20', stroke: '#a08000', 'stroke-width': .6 });

  text(g, 34, 49, '4h', '#300', 'title');
  text(g, 34, 64, 'Alemania 40 Cash (1€)', '#300', 'title');
  text(g, 26, 641, 'IT-Finance.com - Tiempo Real', '#111', 'small');

  frame(g, 22, 644);
  for (let p = 23000; p <= 24800; p += 100) {
    const y = Math.round(290 - (p - 24000) * .3342);
    line(g, 1871, y + .5, 1875, y + .5, '#7a929e');
    const label = Math.floor(p / 1000) + '.' + String(p % 1000).padStart(3, '0');
    if (p < 24200 || p > 24300) text(g, 1877, p === 24800 ? y + 6 : y + 4, label, '#111', 'axis');
  }
  [[178, '24.328,4', '#a00000'], [191, '24.302,8', '#a00000'], [213, '24.216,4', '#000090'], [225, '24.209,8', '#111']].forEach(([y, s, c]) => {
    rect(g, 1875.500, y - 6.500, 45, 13, '#f4f6f7', '#7a929e');
    text(g, 1877, y + 3, s, c);
  });
})();

/* ---------- Sistema de trenes ---------- */
(function trains() {
  const g = document.getElementById('trains');
  rect(g, 24, 644, 1847, 127, '#fff');
  rect(g, 24, 654, 1672, 22, '#d9f5d6');
  rect(g, 24, 743, 1672, 22, '#ffdada');
  grid(g, 646, 770, [699.5, 721.5]);

  const fast = parse(`24,727 38,714 57,712 65,718 75,738 84,742 92,735 102,697 110,677 118,671 127,673 136,684 145,683 154,676 162,664 171,660
    180,661 189,664 198,668 208,673 224,683 233,692 242,690 251,691 261,700 269,720 278,733 287,732 304,726 313,724 322,707 331,701 340,698
    349,707 358,726 367,740 375,741 384,737 393,722 402,721 411,718 420,735 429,744 438,749 447,753 456,748 465,740 474,725 482,727 491,743
    500,760 509,762 517,758 526,747 535,736 544,731 552,737 561,745 571,745 579,737 589,736 598,737 607,738 616,733 624,703 633,677 642,657
    650,665 658,680 669,703 678,720 686,727 695,731 704,736 713,743 722,748 731,730 740,723 748,718 757,732 766,732 775,741 783,745 792,744
    801,744 819,748 828,737 836,718 846,693 854,687 863,684 872,695 881,708 890,720 899,733 907,734 916,727 926,697 934,678 943,664 952,662
    961,664 970,670 979,673 988,674 996,676 1005,681 1013,703 1022,733 1032,755 1041,754 1049,752 1058,737 1067,720 1076,700 1085,682
    1093,670 1102,664 1111,663 1120,665 1130,667 1139,669 1147,668 1155,664 1165,664 1174,665 1183,675 1191,692 1200,720 1209,736 1218,738
    1226,736 1235,737 1244,747 1253,748 1262,741 1271,732 1280,724 1298,721 1307,708 1315,690 1324,674 1334,667 1342,672 1351,677 1361,678
    1369,673 1378,682 1387,707 1396,732 1404,735 1413,733 1422,732 1430,728 1440,720 1448,700 1457,685 1466,670 1474,668 1483,680 1493,692
    1502,688 1509,673 1519,662 1528,661 1537,662 1546,665 1555,666 1564,666 1573,665 1582,663 1599,660 1608,661 1617,666 1626,680 1635,710
    1643,735 1652,743 1662,744 1670,746 1679,751 1688,750 1697,746`);
  const slow = parse(`24,691 38,689 47,692 65,693 75,699 84,702 92,703 102,695 110,691 118,690 127,691 136,693 145,692 154,690 162,683 171,680
    189,672 198,669 216,668 234,667 242,665 251,666 261,667 269,672 278,675 287,674 306,672 322,671 331,672 340,673 349,675 358,678 367,682
    375,683 384,684 393,682 402,683 411,684 420,691 429,702 438,708 447,718 456,724 465,728 474,727 482,732 491,740 500,750 509,756 517,758
    526,751 535,746 544,745 552,753 561,756 571,755 579,751 589,750 598,751 607,754 616,752 624,748 633,742 642,734 650,734 669,742 678,746
    695,749 704,754 713,758 722,759 731,755 748,754 757,757 766,758 775,761 784,762 792,760 819,761 828,757 836,754 846,749 854,746 863,744
    872,745 881,748 890,750 899,751 907,750 916,749 926,744 934,737 943,728 952,718 961,713 970,710 988,711 996,708 1005,707 1013,712 1022,717
    1032,723 1049,722 1058,719 1067,714 1076,709 1085,705 1093,701 1111,692 1120,691 1130,683 1139,678 1147,668 1155,662 1165,659 1174,658
    1183,663 1191,668 1200,676 1209,679 1226,678 1235,682 1244,688 1253,694 1262,697 1280,694 1297,693 1315,691 1334,687 1342,688 1361,684
    1369,681 1378,682 1387,686 1396,691 1404,693 1413,694 1430,692 1440,691 1448,688 1457,684 1466,678 1474,671 1493,672 1502,669 1509,665
    1519,659 1528,657 1546,658 1564,657 1573,659 1582,657 1599,656 1608,658 1617,660 1626,665 1635,670 1643,673 1652,674 1662,679 1670,688
    1679,692 1688,694 1697,692`);
  const lag = x => [0, 9, 18, 27, 36].reduce((s, d) => s + at(slow, Math.max(24, x - d)), 0) / 5;

  for (let i = 1; i < fast.length; i++) {
    const [a, b] = [fast[i - 1], fast[i]];
    poly(g, [a, b, [b[0] + 4, b[1]], [a[0] + 4, a[1]]], b[1] > a[1] ? 'rgba(240,120,120,.45)' : 'rgba(120,220,120,.45)');
  }
  band(g, x => at(slow, x), lag, 24, 1696, 'rgba(90,90,200,.4)', 'rgba(220,90,210,.38)');
  band(g, x => Math.min(at(slow, x), 676), () => 676, 24, 1696, 'rgba(0,120,0,.4)', 'none');
  band(g, () => 743, x => Math.max(at(slow, x), 743), 24, 1696, 'rgba(130,10,0,.4)', 'none');

  [654.500, 676.500, 743.500, 765.500].forEach(y => line(g, 24, y, 1696, y, '#000'));
  line(g, 24, 710, 1696, 710, '#0000a0', 2, '5 4');
  path(g, fast.map(p => [p[0] + 4, p[1]]).filter(p => p[0] < 1698), '#111', 1, '3 3');
  runs(g, fast, (a, b) => b[1] > a[1] ? '#d62424' : '#000', 2);
  path(g, dense(slow).map(p => [p[0], lag(p[0])]), '#222', 3, '6 5');
  runs(g, slow, (a, b) => b[1] > a[1] ? '#ff0000' : '#00009c', 4);

  parse(`65,716 127,672 180,661 251,691 349,706 420,728 482,727 552,737 598,736 650,662 756,724 775,738 801,745 872,691 960,664 1120,665
    1138,668 1165,664 1183,672 1235,737 1342,671 1378,676 1483,677 1537,662 1573,666 1608,661 1670,745`).forEach(p => tri(g, ...p, false, '#b40000', 5));
  parse(`92,739 146,684 242,691 287,733 384,738 456,752 517,761 579,742 616,737 731,740 766,732 792,744 828,742 916,732 1041,755 1130,667
    1147,670 1174,665 1226,738 1262,745 1369,677 1413,735 1501,689 1564,666 1582,665 1662,744 1688,751`).forEach(p => tri(g, ...p, true, '#0000b4', 5));

  frame(g, 644, 771);
  tag(g, 688, '69,404', '#111');
  tag(g, 738, '20', '#111');
  tag(g, 744, '', '#111', 30);
  [[654, '100'], [676, '80'], [751, '16,200'], [765, '0']].forEach(([y, s]) => tag(g, y, s, '#111'));
  tag(g, 697, '65,705', '#0000a0');
  tag(g, 710, '50', '#0000a0');
  text(g, 1878, 724, '40', '#111');
})();

/* ---------- Willy ---------- */
(function willy() {
  const g = document.getElementById('willy');
  rect(g, 24, 771, 1847, 74, '#fff');
  const zones = {
    '#c0c0fc': `34,52 79,105 123,132 159,167 176,194 203,212 220,229 238,247 274,292 300,327 336,345 371,380 389,398 939,956 974,983 992,1010
      1036,1045 1054,1116 1125,1134 1142,1160 1169,1178 1213,1222 1258,1276 1355,1364 1462,1471 1488,1515 1524,1533 1550,1568 1577,1586
      1603,1612 1639,1648 1674,1683`,
    '#fca4a4': `416,433 442,451 469,504 531,557 584,602 646,664 673,690 699,717 735,744 752,761 770,788 797,806 859,868 877,886 894,903 912,921
      1320,1329 1391,1400 1408,1426 1435,1444`,
    '#bf6464': '132,141 407,416 1284,1293 1338,1347 1382,1391',
    '#64bc64': '150,159 930,939 1329,1338 1347,1355 1453,1462'
  };
  for (const c in zones) parse(zones[c]).forEach(([a, b]) => rect(g, a, 771, b - a, 74, c));
  grid(g, 772, 844);

  const w = parse(`24,794 29,800 47,798 65,802 75,808 92,803 101,796 110,804 118,809 127,809 132,811 138,818 146,813 155,803 162,802 171,803
    180,792 189,791 198,792 208,790 224,790 234,792 242,783 251,791 261,797 278,797 287,795 296,796 304,793 322,792 331,796 340,795 349,797
    358,805 367,806 375,804 384,806 393,799 402,806 411,815 420,819 429,821 438,818 447,833 456,829 465,824 474,824 482,837 491,842 509,841
    517,837 526,826 535,831 544,834 552,839 561,837 579,831 589,835 598,836 616,833 624,826 633,822 642,817 651,824 660,829 677,831 686,833
    695,831 704,838 713,841 731,830 740,837 748,832 757,838 766,837 775,839 784,839 792,833 801,841 809,840 836,830 846,822 854,819 863,822
    872,821 883,827 890,825 899,826 907,820 916,819 926,810 935,796 943,792 952,783 961,786 970,791 979,787 996,787 1005,784 1013,800
    1022,803 1032,804 1049,803 1058,794 1076,792 1085,786 1093,783 1102,782 1111,778 1120,783 1130,782 1139,784 1147,779 1155,778 1165,782
    1174,778 1183,788 1191,791 1200,793 1209,793 1218,790 1226,792 1235,800 1253,804 1262,804 1271,802 1280,810 1290,816 1298,813 1315,811
    1324,811 1334,804 1342,812 1351,805 1361,800 1369,801 1378,806 1387,813 1396,817 1404,812 1413,818 1422,819 1430,817 1440,820 1448,817
    1457,802 1466,796 1474,797 1483,801 1493,794 1509,779 1519,780 1537,780 1546,783 1555,780 1564,780 1573,783 1582,778 1591,778 1599,780
    1608,779 1617,783 1626,790 1643,790 1652,796 1662,800 1672,809 1678,804 1688,804 1697,807`);
  band(g, x => Math.min(at(w, x), 794), () => 794, 24, 1696, 'rgba(60,150,60,.45)', 'none');
  band(g, () => 826, x => Math.max(at(w, x), 826), 24, 1696, 'rgba(120,20,20,.45)', 'none');
  [777.500, 842.500].forEach(y => line(g, 24, y, 1696, y, '#000', 1, '5 4'));
  line(g, 24, 794.500, 1696, 794.500, '#0000a0', 2);
  line(g, 24, 810.500, 1696, 810.500, '#0000a0', 2, '5 4');
  line(g, 24, 826.500, 1696, 826.500, '#d80000', 2);
  runs(g, w, (a, b) => {
    const m = (a[1] + b[1]) / 2;
    return m < 794.5 ? '#00c800' : m > 827 ? '#980000' : b[1] < a[1] ? '#0000c8' : '#ff9800';
  }, 4);
  parse('127,810 402,809 1279,810 1334,810 1378,810').forEach(p => tri(g, ...p, false, '#b40000', 6));
  parse('146,811 926,811 1324,811 1343,811 1449,811').forEach(p => tri(g, ...p, true, '#0000b4', 6));

  frame(g, 771, 845);
  tag(g, 778, '0', '#111');
  tag(g, 794, '-25', '#0000a0');
  tag(g, 807, '43,240', '#ff9800');
  tag(g, 812, '-50', '#0000a0');
  tag(g, 826, '-75', '#d80000');
  tag(g, 838, '-100', '#111');
})();

/* ---------- Awesome Evolution ---------- */
(function awesome() {
  const g = document.getElementById('awesome'), ZERO = 886.5;
  rect(g, 24, 845, 1847, 78, '#fff');
  grid(g, 846, 922, [854.5, 919.5]);
  const f = parse(`24,894 32,892 40,893 57,891 75,895 84,898 92,897 101,892 110,885 118,884 127,886 136,885 145,887 154,883 162,878 171,877
    180,876 189,872 208,873 224,874 234,876 242,875 251,875 261,877 269,879 278,881 298,883 322,883 340,886 349,887 358,890 367,892 375,894
    384,894 402,891 411,894 420,898 429,902 447,901 456,902 465,898 474,896 482,897 491,900 500,903 509,905 517,907 526,904 535,899 544,900
    552,908 561,918 571,917 579,911 589,909 598,909 607,907 616,905 624,898 633,891 642,886 651,883 660,887 678,890 695,892 704,893 713,898
    722,899 731,895 740,894 748,896 757,896 766,897 783,898 792,900 801,899 809,902 819,902 828,899 836,895 846,890 854,885 863,883 872,883
    890,887 907,887 916,884 926,882 934,876 943,870 952,863 961,859 970,861 979,863 996,864 1005,867 1013,872 1022,880 1032,886 1041,887
    1049,889 1058,887 1067,885 1085,881 1102,877 1120,874 1130,872 1139,868 1147,864 1155,859 1165,858 1174,862 1183,866 1191,874 1200,880
    1209,883 1226,883 1235,888 1244,894 1253,899 1262,901 1271,898 1280,897 1298,896 1315,892 1334,888 1351,887 1361,884 1369,881 1378,882
    1387,885 1396,888 1404,890 1413,891 1422,890 1440,888 1448,886 1457,882 1466,877 1474,876 1493,876 1509,870 1519,867 1528,865 1546,866
    1555,868 1564,866 1573,860 1582,856 1591,853 1599,857 1608,860 1617,863 1626,868 1635,874 1643,878 1652,881 1662,887 1670,893 1679,899 1697,899`);
  const s = parse(`24,889 38,888 57,887 75,893 92,897 110,895 127,891 145,890 162,889 180,883 198,878 224,874 251,872 261,872 278,874 302,877
    322,876 340,878 358,880 375,885 393,889 411,888 429,892 447,898 465,900 482,900 500,902 517,907 544,909 561,912 571,914 589,921 607,918
    624,915 642,908 660,900 678,899 695,902 722,904 748,902 757,900 775,899 801,902 819,904 828,904 846,899 872,890 890,892 907,894 926,893
    943,884 961,873 979,866 996,864 1013,866 1032,873 1049,878 1067,878 1093,873 1130,868 1147,863 1165,858 1174,857 1191,862 1209,870
    1226,876 1244,879 1262,887 1280,890 1315,889 1324,890 1342,888 1369,886 1378,887 1396,887 1422,893 1448,890 1466,886 1483,880 1493,877
    1519,873 1537,868 1564,866 1582,861 1599,853 1608,852 1617,852 1626,854 1635,858 1652,864 1670,871 1688,880 1697,882`);
  for (let i = 0; i < candles.length; i++) {
    const x = xAt(i), v = at(f, x), rising = v < at(f, x - 7), sv = at(s, x);
    const c = v < ZERO ? (rising ? '#0c0cff' : '#ff10f0') : (rising ? '#109898' : '#ff1414');
    const pale = sv < at(s, x - 7) ? '#d4ffd4' : '#ffd2d2';
    if ((sv < ZERO) === (v < ZERO) && Math.abs(sv - ZERO) > Math.abs(v - ZERO)) rect(g, x - 3.5, Math.min(v, sv), 7, Math.abs(sv - v), pale);
    rect(g, x - 3.5, Math.min(v, ZERO), 7, Math.abs(v - ZERO), c);
  }
  line(g, 24, ZERO, 1696, ZERO, '#1414f0', 2);
  runs(g, f, (a, b) => b[1] > a[1] ? '#b400b4' : '#000032', 3);
  runs(g, s, (a, b) => b[1] > a[1] ? '#ff9600' : '#64ff64', 3);
  parse('101,891 465,900 517,906 579,913 1147,864 1334,888 1413,889 1573,860').forEach(p => tri(g, ...p, true, '#00f4ff', 5));
  parse('234,875 491,901 561,918 996,865 1165,858 1396,887 1546,867 1599,855').forEach(p => tri(g, ...p, false, '#f6f000', 5));

  frame(g, 845, 923);
  text(g, 1878, 857, '500', '#111');
  text(g, 1878, 921, '-500', '#111');
  tag(g, 875, '58,989', '#f01010');
  tag(g, 882, '58,989', '#ff9800');
  tag(g, 886, '0', '#f01010');
  tag(g, 899, '-189,40', '#b400b4');
  tag(g, 906, '-189,40', '#f01010');
})();

/* ---------- Barra Fuerza ---------- */
(function force() {
  const g = document.getElementById('force');
  rect(g, 24, 923, 1847, 71, '#fff');
  // kind: heights of the consecutive bars
  const data = `b40,43 o38,34,27,25 b28,36,39 o36,33,29 b33,34 o34,30,24,22 b22,24 o21,17,12,7 b9,19,25,26 o24,21,20,20,17,14,10,8,4 b6,8 o7,6
    b7,10,17,21,24 o21,21 b22,24,30,36 o35,33,30 b32,39,42 o40 k54 d59,64 p64 d65 p61,58,54,53,52,52,50,49 o49,44 b45 o45 b49 k50 d50,50,54,57
    p56,52 o48 b49 o49 k50 o47,44,42,40,39 b43,43 o39,38,36,34 b37,44 k52 d57 p54 d61,66,67 p64,56 o48,41 b42 o41,37,31,26,24 b25,27,27
    o25,24,23,23 b29,33,34 o33,32,31 b34,38 o37,34,31,28 b32,35,36 o33,30,27 s28 b33 o31,28,23,21 b22,25,26 o24,21,19 b23,24,24 o23 b24 s24 o23
    b25,27,31,32 o31,31 b31,35,35 o32,28,24 b30,35,37 o34,32,31,28 b29 o28,25 b29,31,37,40 o39,36`;
  const back = { b: '#3cff3c', o: '#ffff88', p: '#aeeeff', d: '#6868b8', k: '#640000', s: '#ffff88' };
  const body = { b: '#1e78a4', o: '#ff7846', p: '#d87078', d: '#2c2cdc', k: '#320064', s: '#7878c8' };
  const edge = { b: '#1448a0', o: '#d04a22', p: '#b84050', d: '#1616a8', k: '#1e0050', s: '#4848b0' };
  const bars = [];
  data.trim().split(/\s+/).forEach(r => r.slice(1).split(',').forEach(h => bars.push([r[0], +h])));
  bars.forEach(([k], i) => rect(g, Math.round(xAt(i) - 4.5), 923, 10, 71, back[k]));
  rect(g, 1702, 923, 8, 71, '#fff');
  grid(g, 924, 993, [933.5, 961.5, 988.5]);
  bars.forEach(([k, h], i) => {
    const x = Math.round(xAt(i) - 4.5), w = Math.round(xAt(i + 1) - 4.5) - x;
    rect(g, x, 994 - h, w, h, edge[k]);
    rect(g, x + 1, 996 - h, w - 3, h, body[k]);
  });
  line(g, 24, 947.500, 1696, 947.500, '#000');
  frame(g, 923, 994);
  text(g, 1878, 936, '0,6', '#111');
  text(g, 1878, 991, '0,2', '#111');
  tag(g, 947, '0,5000', '#111');
  tag(g, 961, '0,4027', '#f01010');
})();

(function dates() {
  const g = document.getElementById('dates');
  days.forEach(([x, s]) => {
    line(g, x + .5, 994, x + .5, 997, '#6f8793');
    if (s) text(g, x, 1007, s, '#111', 't', 'middle');
  });
})();

/* ---------- drawing tools ---------- */
const bell = '<path d="M5 14c3-2 1-7 5-8 4 1 2 6 5 8zM9 15h2v2H9z" fill="#ffe41e" stroke="#7a6400"/>';
const oval = c => ['Elipse', `<ellipse cx="10" cy="11" rx="7" ry="5" fill="${c}55" stroke="${c}"/><path d="M3 13v4M1 15h4M17 4v4M15 6h4" stroke="#00c"/>`];
const flat = c => ['Línea horizontal', `<path d="M1 11h18" stroke="${c}" stroke-width="2"/>`];
const slope = c => ['Línea', `<path d="M2 19L19 3" stroke="${c}" stroke-width="1.500"/>`];
const stub = c => ['Segmento', `<path d="M9 12h10" stroke="${c}" stroke-width="2"/><circle cx="8" cy="12" r="1.500" fill="none" stroke="${c}"/>`];
const F = '<path d="M15 10h4M15.500 9.500v6M15 13h3" stroke="#03d" stroke-width="1.500" fill="none"/>';
const box = (c, f) => ['Rectángulo', `<rect x="5" y="6" width="11" height="9" fill="${f}" stroke="${c}" stroke-width="1.500"/><path d="M4 13v4M2 15h4M16 4v4M14 6h4" stroke="#00c"/>`];
const tools = [
  ['Cursor', '<path d="M7 4v11l3-3 2 5 2-1-2-5h3z" fill="#ddd" stroke="#555"/>'],
  ['Lupa', '<circle cx="9" cy="8" r="4" fill="#bcd" stroke="#444"/><path d="M12 11l4 5" stroke="#222" stroke-width="2"/>'],
  ['Zoom zona', '<path d="M2 8h6v9H2zM8 16h6" fill="none" stroke="#28f" stroke-dasharray="2 1"/><circle cx="11" cy="8" r="4" fill="#bcd" stroke="#444"/><path d="M14 11l3 5" stroke="#222" stroke-width="2"/>'],
  ['Alerta en línea', bell + '<path d="M2 5h16M13 3l4 4" stroke="#24c"/><path d="M13 8v7l2-2 2 3 1-1-2-3h3z" fill="#fff" stroke="#555" stroke-width=".6"/>'],
  ['Alerta', bell + '<path d="M4 5l-2 3M16 5l2 3" stroke="#667"/>'],
  ['Fibonacci', '<path d="M2 12l3-7 3 7 3 3h4" fill="none" stroke="#222" stroke-width="1.500"/><path d="M9 9h9" stroke="#f84" stroke-dasharray="2 1"/>' + F],
  ['Extensión', '<path d="M4 7h12" stroke="#f84" stroke-dasharray="2 1"/><path d="M4 10h10" stroke="#24c" stroke-dasharray="3 1"/>' + F],
  ['Retroceso', '<path d="M4 3h12M4 6h12" stroke="#cc0" stroke-dasharray="2 1"/><path d="M4 10h9M4 15h9" stroke="#ddd"/>' + F],
  box('#6495f5', 'none'), box('#e02020', '#e0202044'),
  ['Flecha', '<path d="M5 16l9-9" stroke="#000" stroke-width="2"/><path d="M17 4l-2 7-5-5z"/><circle cx="5" cy="16" r="1.500" fill="#ccc" stroke="#000"/>'],
  ['Texto', '<rect x="4" y="4" width="13" height="13" rx="2" fill="#b8d0ee" stroke="#5a90e0"/><path d="M7 8h7M10.500 8v7" stroke="#111" stroke-width="2"/>'],
  ['Texto en globo', '<circle cx="10" cy="10" r="7" fill="#b8d8e8" stroke="#48a"/><path d="M7 7h7M10.500 7v7" stroke="#080" stroke-width="2"/>'],
  ['Segmento', '<path d="M6 14l9-7" stroke="#222"/><circle cx="5" cy="15" r="2" fill="none" stroke="#222"/><circle cx="16" cy="6" r="2" fill="none" stroke="#222"/>'],
  stub('#34b034'), stub('#f01010'),
  ['Regla', '<path d="M2 14L15 4l3 4L5 18z" fill="#aab8c0" stroke="#555"/><path d="M6 12l1 2M9 10l1 2M12 8l1 2" stroke="#555"/>'],
  ['Zigzag', '<path d="M2 4h16v5H2z" fill="#8cbc9c"/><path d="M2 9h16v8H2z" fill="#d8a8b8"/><path d="M2 14l4-4 4 4 4-8 4 2" fill="none" stroke="#88f"/>'],
  oval('#e03030'), oval('#8a5020'), oval('#108030'), oval('#20d820'),
  slope('#222222'), slope('#40b040'), slope('#ff0000'),
  flat('#222'), flat('#fa9080'), flat('#10f010'), flat('#0a800a'), flat('#f01010'), flat('#6495f5'), flat('#0000a0'),
  ['Vertical', '<path d="M10.500 2v18" stroke="#222"/>'],
  ['Ángulo', '<path d="M3 15h14M3 15l11-10" stroke="#e04040"/><path d="M9 9l2 6M16 7c-2-1-3 3-1 4s3-3 1-4" fill="none" stroke="#03d"/>'],
  ['Ciclo', '<circle cx="9" cy="11" r="6" fill="none" stroke="#f08030"/><path d="M9 9v4M7 11h4M15 5v4M13 7h4" stroke="#00c"/>'],
  ['Impulso', '<path d="M2 17l3-9 3 9 4-12 3 10 3-10" fill="none" stroke="#24c" stroke-dasharray="2 1"/><path d="M1 6h2M10 4h4M16 12h3" stroke="#03d" stroke-width="2"/>'],
  ['Corrección', '<path d="M2 16l5-10 5 9 5-8" fill="none" stroke="#68c" /><path d="M1 17h3M11 4h4M14 17h4" stroke="#03d" stroke-width="1.500"/>'],
  ['Bien', '<path d="M3 11l3-3 3 4 7-9 2 2-9 13z" fill="#2cae3c"/>'],
  ['Me gusta', '<path d="M3 10h3v8H3zM7 10l4-7c3 0 1 4 1 6h6v7l-2 2H7z" fill="#2cae3c"/>'],
  ['Mal', '<path d="M3 6l3-3 4 4 4-4 3 3-4 5 4 5-3 3-4-5-4 5-3-3 4-5z" fill="#f01818"/>'],
  ['Aviso', '<path d="M10 3l8 14H2z" fill="#ffb428" stroke="#c07800"/><path d="M10 8v4M10 14v2" stroke="#333" stroke-width="2"/>']
];
const button = ([name, art], cls = '') => `<button class="${cls}" aria-label="${name}" title="${name}"><svg width="20" height="22" viewBox="0 0 20 22">${art}</svg></button>`;
const chevron = (cls, d) => `<button class="${cls}" aria-label="Desplazar"><svg width="8" height="6" viewBox="0 0 8 6"><path d="${d}" fill="none" stroke="#333"/></svg></button>`;
document.getElementById('tools').innerHTML =
  chevron('up', 'M1 4l3-3 3 3') +
  '<div class="list">' + tools.map((t, i) => button(t, i ? '' : 'on')).join('') + '</div>' +
  chevron('down', 'M1 1l3 3 3-3') +
  button(['Plantillas', '<path d="M4 5h9v10H4z" fill="#eee" stroke="#777"/><circle cx="6" cy="7" r="4" fill="#1a9a1a"/><path d="M4 7h4M6 5v4" stroke="#fff"/><path d="M9 17l6-7 2 2-6 6M13 19h6l-3 3z" fill="#fff" stroke="#222"/>'], 'tall') +
  button(['Más', '<path d="M3 11h2M8 11h2M13 11h2" stroke="#333" stroke-width="2"/><path d="M11 15h6l-3 3z"/>'], 'tall');
```
